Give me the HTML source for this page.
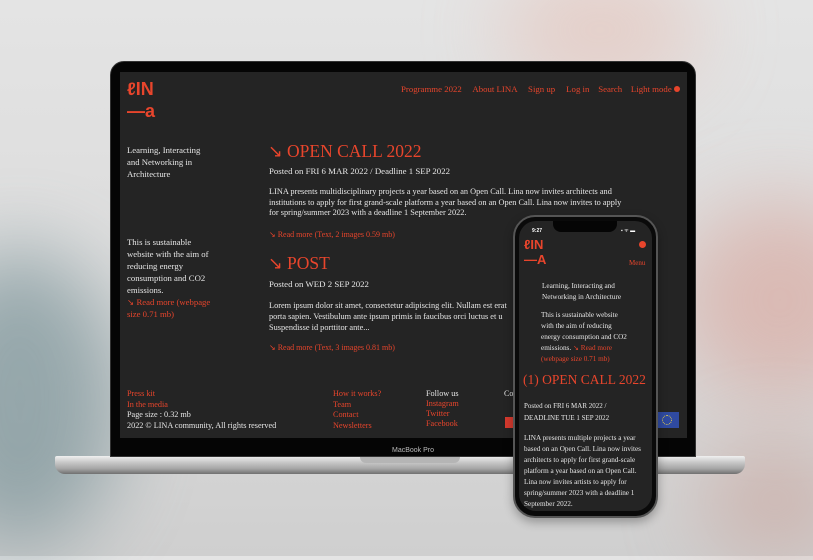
<!DOCTYPE html>
<html><head><meta charset="utf-8"><style>
*{margin:0;padding:0;box-sizing:border-box}
body{width:813px;height:556px;overflow:hidden;position:relative;font-family:"Liberation Serif",serif;
background:linear-gradient(180deg,#e4e4e4 0%,#dadada 60%,#cfcfcf 100%)}
.blob{position:absolute;border-radius:50%;filter:blur(40px)}
.a{position:absolute;white-space:nowrap}
.o{color:#e8452c}
.w{color:#e6e6e6}
</style></head><body>
<div class="blob" style="left:-80px;top:250px;width:200px;height:300px;background:#5f7f86;opacity:.55"></div>
<div class="blob" style="left:680px;top:200px;width:200px;height:200px;background:#d9a49a;opacity:.6"></div>
<div class="blob" style="left:500px;top:-30px;width:200px;height:120px;background:#e6c0b6;opacity:.6"></div>
<div class="blob" style="left:700px;top:440px;width:150px;height:120px;background:#c89a90;opacity:.5"></div>

<div class="a" style="left:55px;top:456px;width:690px;height:18px;border-radius:2px 2px 10px 10px;background:linear-gradient(180deg,#f0f0f0 0%,#c8c8c8 35%,#a6a6a6 70%,#707070 100%)"></div>
<div class="a" style="left:360px;top:456px;width:100px;height:7px;border-radius:0 0 6px 6px;background:#b5b5b5"></div>
<div class="a" style="left:110px;top:61px;width:586px;height:396px;border-radius:14px 14px 0 0;background:#050505;border:1px solid #333"></div>
<div class="a" style="left:120px;top:72px;width:567px;height:366px;background:#242424"></div>
<div class="a" style="left:392px;top:447px;font:7px 'Liberation Sans',sans-serif;color:#bbb">MacBook Pro</div>

<div class="a o" style="left:127px;top:80px;font:bold 18px/18px 'Liberation Sans',sans-serif">ℓIN</div>
<div class="a o" style="left:127px;top:102px;font:bold 18px/18px 'Liberation Sans',sans-serif">—a</div>
<div class="a o" style="left:401px;top:84px;font-size:8.8px">Programme 2022 &nbsp;&nbsp;&nbsp; About LINA &nbsp;&nbsp;&nbsp; Sign up &nbsp;&nbsp;&nbsp; Log in &nbsp;&nbsp; Search &nbsp;&nbsp; Light mode <span style="display:inline-block;width:6px;height:6px;border-radius:50%;background:#e8452c"></span></div>

<div class="a w" style="left:127px;top:144px;font-size:8.7px;line-height:12px">Learning, Interacting<br>and Networking in<br>Architecture</div>
<div class="a w" style="left:127px;top:236px;font-size:8.7px;line-height:12px">This is sustainable<br>website with the aim of<br>reducing energy<br>consumption and CO2<br>emissions.<br><span class="o">↘ Read more (webpage<br>size 0.71 mb)</span></div>

<div class="a o" style="left:268px;top:141px;font-size:17.5px">↘ OPEN CALL 2022</div>
<div class="a w" style="left:269px;top:166px;font-size:8.8px">Posted on FRI 6 MAR 2022 / Deadline 1 SEP 2022</div>
<div class="a w" style="left:269px;top:187px;font-size:8.3px;line-height:10.7px">LINA presents multidisciplinary projects a year based on an Open Call. Lina now invites architects and<br>institutions to apply for first grand-scale platform a year based on an Open Call. Lina now invites to apply<br>for spring/summer 2023 with a deadline 1 September 2022.</div>
<div class="a o" style="left:269px;top:230px;font-size:8px">↘ Read more (Text, 2 images 0.59 mb)</div>
<div class="a o" style="left:268px;top:253px;font-size:17.5px">↘ POST</div>
<div class="a w" style="left:269px;top:279px;font-size:8.8px">Posted on WED 2 SEP 2022</div>
<div class="a w" style="left:269px;top:300px;font-size:8.3px;line-height:11px">Lorem ipsum dolor sit amet, consectetur adipiscing elit. Nullam est erat<br>porta sapien. Vestibulum ante ipsum primis in faucibus orci luctus et u<br>Suspendisse id porttitor ante...</div>
<div class="a o" style="left:269px;top:343px;font-size:8px">↘ Read more (Text, 3 images 0.81 mb)</div>

<div class="a" style="left:127px;top:389px;font-size:8.2px;line-height:10.5px"><span class="o">Press kit<br>In the media</span><br><span class="w">Page size : 0.32 mb<br>2022 © LINA community, All rights reserved</span></div>
<div class="a o" style="left:333px;top:389px;font-size:8.2px;line-height:10.5px">How it works?<br>Team<br>Contact<br>Newsletters</div>
<div class="a" style="left:426px;top:389px;font-size:8.2px;line-height:10px"><span class="w">Follow us</span><br><span class="o">Instagram<br>Twitter<br>Facebook</span></div>
<div class="a w" style="left:504px;top:389px;font-size:8px">Co</div>
<div class="a" style="left:505px;top:417px;width:10px;height:11px;background:#d63a2e"></div>
<div class="a" style="left:657px;top:412px;width:22px;height:16px;background:#2f4aa0"></div>
<div class="a" style="left:662px;top:415px;width:10px;height:10px;border-radius:50%;border:1px dotted #e8d34a"></div>

<div class="a" style="left:513px;top:215px;width:145px;height:303px;border-radius:22px;background:#0a0a0a;border:2px solid #555;box-shadow:0 4px 10px rgba(0,0,0,.3)"></div>
<div class="a" style="left:519px;top:221px;width:133px;height:290px;border-radius:17px;background:#242424;overflow:hidden">
  <div class="a" style="left:34px;top:0;width:64px;height:11px;border-radius:0 0 8px 8px;background:#050505"></div>
  <div class="a" style="left:13px;top:7px;font:bold 5px 'Liberation Sans',sans-serif;color:#fff">9:27</div>
  <div class="a" style="left:102px;top:7px;font:5px 'Liberation Sans',sans-serif;color:#fff">▪ ᯤ ▬</div>
  <div class="a o" style="left:5px;top:17px;font:bold 13px/13px 'Liberation Sans',sans-serif">ℓIN</div>
  <div class="a o" style="left:5px;top:32px;font:bold 13px/13px 'Liberation Sans',sans-serif">—A</div>
  <div class="a" style="left:120px;top:20px;width:7px;height:7px;border-radius:50%;background:#e8452c"></div>
  <div class="a o" style="left:110px;top:38px;font-size:7px">Menu</div>
  <div class="a w" style="left:23px;top:60px;font-size:7.2px;line-height:11px">Learning, Interacting and<br>Networking in Architecture</div>
  <div class="a w" style="left:22px;top:89px;font-size:7.2px;line-height:11px">This is sustainable website<br>with the aim of reducing<br>energy consumption and CO2<br>emissions. <span class="o">↘ Read more</span><br><span class="o">(webpage size 0.71 mb)</span></div>
  <div class="a o" style="left:4px;top:151px;font-size:13.5px">(1) OPEN CALL 2022</div>
  <div class="a w" style="left:5px;top:180px;font-size:7px;line-height:11.5px">Posted on FRI 6 MAR 2022 /<br>DEADLINE TUE 1 SEP 2022</div>
  <div class="a w" style="left:5px;top:212px;font-size:7.2px;line-height:11px">LINA presents multiple projects a year<br>based on an Open Call. Lina now invites<br>architects to apply for first grand-scale<br>platform a year based on an Open Call.<br>Lina now invites artists to apply for<br>spring/summer 2023 with a deadline 1<br>September 2022.</div>
</div>
</body></html>
